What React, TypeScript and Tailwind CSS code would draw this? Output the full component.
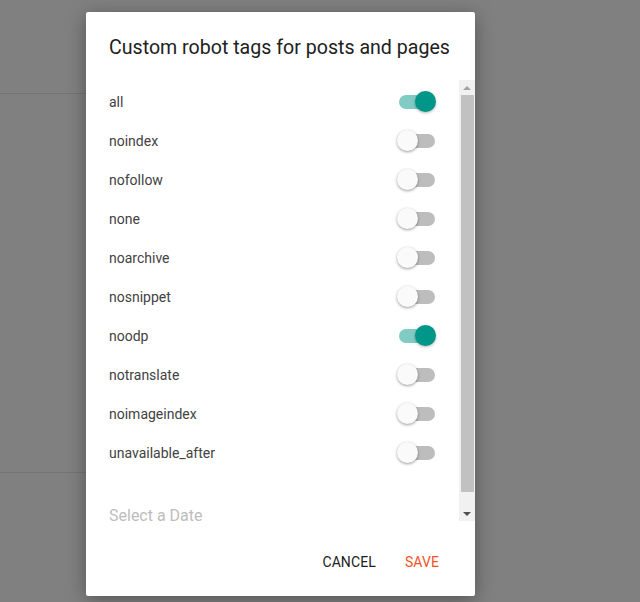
import React from 'react';

const TAGS: {name: string; on: boolean}[] = [
  {name: 'all', on: true},
  {name: 'noindex', on: false},
  {name: 'nofollow', on: false},
  {name: 'none', on: false},
  {name: 'noarchive', on: false},
  {name: 'nosnippet', on: false},
  {name: 'noodp', on: true},
  {name: 'notranslate', on: false},
  {name: 'noimageindex', on: false},
  {name: 'unavailable_after', on: false},
];

const Toggle = ({on}: {on: boolean}) => (
  <div className="relative w-[39px] h-[21px]">
    <div className={`absolute left-[2px] right-[1px] top-[3px] h-[14px] rounded-full ${on ? 'bg-[#80cbc4]' : 'bg-[#bdbdbd]'}`}/>
    {on ? (
      <div className="absolute right-0 top-[-1px] w-[21px] h-[21px] rounded-full bg-[#009688] shadow-[0_1px_3px_rgba(0,0,0,0.3)]"/>
    ) : (
      <div className="absolute left-0 top-[-1px] w-[21px] h-[21px] rounded-full bg-[#fafafa] shadow-[0_1px_3px_rgba(0,0,0,0.4)]"/>
    )}
  </div>
);

export default function App() {
  return (
    <div className="w-[640px] h-[602px] bg-[#808080] relative overflow-hidden font-['Roboto',sans-serif]">
      <div className="absolute left-0 top-[93px] w-[90px] h-px bg-[#747474]"/>
      <div className="absolute left-0 top-[472px] w-[90px] h-px bg-[#747474]"/>

      <div className="absolute left-[86px] top-[12px] w-[389px] h-[584px] bg-white rounded-[2px] shadow-[0_4px_20px_rgba(0,0,0,0.35)] flex flex-col">
        <div className="h-[68px] pl-[23px] pt-[24px] text-[19.6px] leading-6 text-[#212121]">
          Custom robot tags for posts and pages
        </div>

        <div className="flex h-[441px]">
          <div className="flex-1 pl-[23px] pr-[23px] pt-[3px]">
            {TAGS.map(t => (
              <div key={t.name} className="h-[39px] flex items-center justify-between">
                <span className="text-[14px] text-[#424242]">{t.name}</span>
                <Toggle on={t.on}/>
              </div>
            ))}
            <div className="mt-[35px] text-[16px] leading-[16px] text-[#bdbdbd]">Select a Date</div>
          </div>

          <div className="w-[16px] bg-[#f1f1f1] flex flex-col items-center">
            <div className="h-[15px] flex items-center justify-center">
              <div className="w-0 h-0 border-l-[4px] border-r-[4px] border-b-[4px] border-l-transparent border-r-transparent border-b-[#a3a3a3]"/>
            </div>
            <div className="w-[13px] h-[397px] bg-[#c1c1c1]"/>
            <div className="flex-1"/>
            <div className="h-[15px] flex items-center justify-center">
              <div className="w-0 h-0 border-l-[4px] border-r-[4px] border-t-[4px] border-l-transparent border-r-transparent border-t-[#505050]"/>
            </div>
          </div>
        </div>

        <div className="flex-1 flex items-center justify-end pr-[36px] gap-[29px] pt-[8px]">
          <button className="text-[14px] font-normal text-[#212121] tracking-[0.1px]">CANCEL</button>
          <button className="text-[14px] font-normal text-[#f4511e] tracking-[0.1px]">SAVE</button>
        </div>
      </div>
    </div>
  );
}
